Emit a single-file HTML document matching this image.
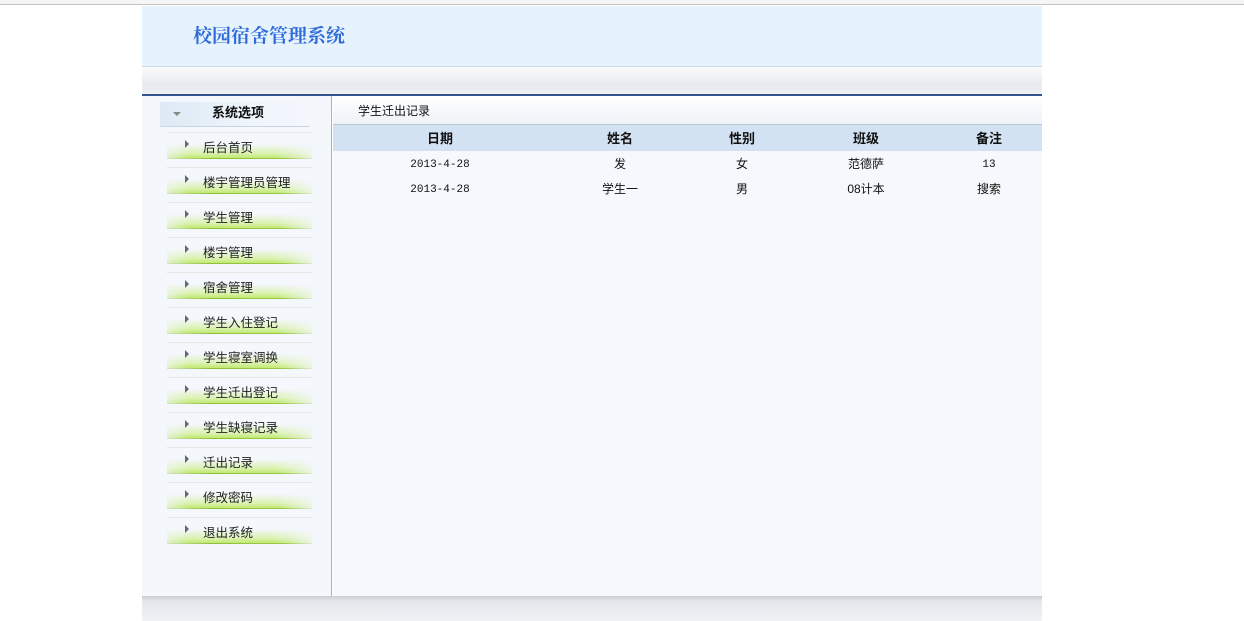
<!DOCTYPE html>
<html><head><meta charset="utf-8"><style>
*{margin:0;padding:0;box-sizing:border-box}
body{width:1244px;height:621px;background:#fff;position:relative;overflow:hidden;font-family:"Liberation Sans","Noto Sans CJK SC","WenQuanYi Zen Hei",sans-serif;font-size:12px;color:#111}
.top{position:absolute;left:0;top:0;width:1244px;height:5px;background:#f5f5f5;border-bottom:1px solid #c4c4c4}
.hdr{position:absolute;left:142px;top:6px;width:900px;height:61px;background:#e6f3fd;border-bottom:1px solid #cfdbe6}
.hdr h1{position:absolute;left:51px;top:15px;font-family:"Noto Serif CJK SC",serif;font-size:19px;color:#2f6bd8;font-weight:bold}
.bar{position:absolute;left:142px;top:67px;width:900px;height:27px;background:linear-gradient(#fafbfc,#e6e9ee 70%,#eef0f3)}
.blue{position:absolute;left:142px;top:94px;width:900px;height:2px;background:#34568f}
.side{position:absolute;left:142px;top:96px;width:190px;height:501px;background:#f4f7fc;border-right:1px solid #a9b3bf}
.main{position:absolute;left:333px;top:96px;width:709px;height:501px;background:#f5f8fc}
.foot{position:absolute;left:142px;top:596px;width:900px;height:25px;background:linear-gradient(#c9ccd0,#e3e7eb 20%,#f0f3f6)}
.st{position:absolute;left:18px;top:6px;width:150px;height:25px;background:linear-gradient(90deg,#dde9f5,#eef5fb 60%,#f4f7fc);border-bottom:1px solid #c9d6e2;font-weight:bold;font-size:13px;line-height:16px}
.st span{position:absolute;left:52px;top:3px}
.st i{position:absolute;left:13px;top:10px;border-left:4px solid transparent;border-right:4px solid transparent;border-top:4px solid #888}
.it{position:absolute;left:25px;width:145px;height:27px;border-top:1px solid #e3e8e0;font-size:12.5px;line-height:16px}
.it b{position:absolute;left:0;right:0;bottom:0;height:15px;background:linear-gradient(180deg,rgba(255,255,255,0),rgba(200,238,120,.55) 60%,rgba(175,228,70,.85));-webkit-mask:linear-gradient(90deg,rgba(0,0,0,.4),#000 15%,#000 75%,rgba(0,0,0,.2))}
.it:after{content:"";position:absolute;left:0;right:0;bottom:0;height:1px;background:linear-gradient(90deg,#d6e2c8,#8fbf3a 30%,#9cc84a 80%,#dfe8d0)}
.it i{position:absolute;left:18px;top:7px;border-top:4px solid transparent;border-bottom:4px solid transparent;border-left:4px solid #667}
.it span{position:absolute;left:36px;top:7px;color:#222}
.ttl{position:absolute;left:0;top:0;width:709px;height:29px;background:linear-gradient(#fff,#eef2f6);border-bottom:1px solid #bcc8d4}
.ttl span{position:absolute;left:25px;top:7px;font-size:12px;line-height:16px}
.th{position:absolute;left:0;top:29px;width:709px;height:26px;background:#d3e2f2}
.c{position:absolute;width:120px;text-align:center;margin-left:-60px;line-height:16px;top:0}
.th .c{top:6px;font-weight:bold;font-size:13px}
.r{position:absolute;left:0;width:709px;height:24px}
.r .c{font-size:12px}
.n{font-family:"Liberation Mono",monospace;font-size:11px!important;top:1px!important}
</style></head><body>
<div class="top"></div>
<div class="hdr"><h1>校园宿舍管理系统</h1></div>
<div class="bar"></div>
<div class="blue"></div>
<div class="side">
<div class="st"><i></i><span>系统选项</span></div>
<div class="it" style="top:36px"><b></b><i></i><span>后台首页</span></div>
<div class="it" style="top:71px"><b></b><i></i><span>楼宇管理员管理</span></div>
<div class="it" style="top:106px"><b></b><i></i><span>学生管理</span></div>
<div class="it" style="top:141px"><b></b><i></i><span>楼宇管理</span></div>
<div class="it" style="top:176px"><b></b><i></i><span>宿舍管理</span></div>
<div class="it" style="top:211px"><b></b><i></i><span>学生入住登记</span></div>
<div class="it" style="top:246px"><b></b><i></i><span>学生寝室调换</span></div>
<div class="it" style="top:281px"><b></b><i></i><span>学生迁出登记</span></div>
<div class="it" style="top:316px"><b></b><i></i><span>学生缺寝记录</span></div>
<div class="it" style="top:351px"><b></b><i></i><span>迁出记录</span></div>
<div class="it" style="top:386px"><b></b><i></i><span>修改密码</span></div>
<div class="it" style="top:421px"><b></b><i></i><span>退出系统</span></div>
</div>
<div class="main">
<div class="ttl"><span>学生迁出记录</span></div>
<div class="th"><div class="c" style="left:107px">日期</div><div class="c" style="left:287px">姓名</div><div class="c" style="left:409px">性别</div><div class="c" style="left:533px">班级</div><div class="c" style="left:656px">备注</div></div>
<div class="r" style="top:60px"><div class="c n" style="left:107px">2013-4-28</div><div class="c" style="left:287px">发</div><div class="c" style="left:409px">女</div><div class="c" style="left:533px">范德萨</div><div class="c n" style="left:656px">13</div></div>
<div class="r" style="top:85px"><div class="c n" style="left:107px">2013-4-28</div><div class="c" style="left:287px">学生一</div><div class="c" style="left:409px">男</div><div class="c" style="left:533px">08计本</div><div class="c" style="left:656px">搜索</div></div>
</div>
<div class="foot"></div>
</body></html>
